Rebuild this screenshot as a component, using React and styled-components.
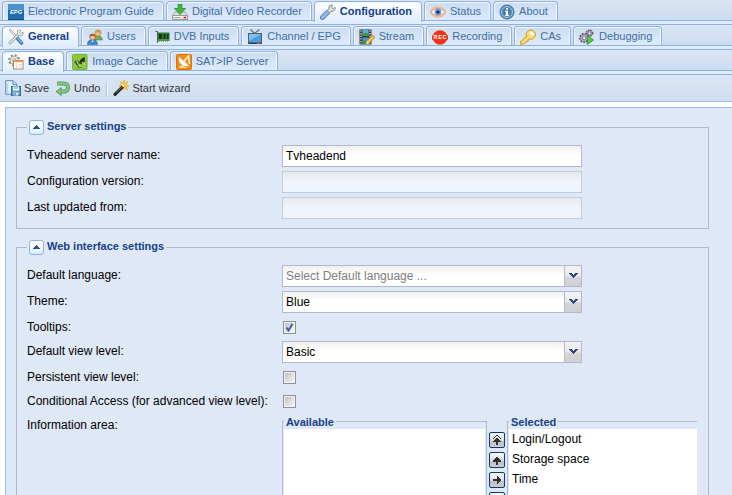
import React from 'react';
import styled, { createGlobalStyle, css } from 'styled-components';

const GlobalStyle = createGlobalStyle`
  * { box-sizing: border-box; }
  html, body { margin: 0; height: 100%; overflow: hidden; background: #fff; }
  body { font-family: "Liberation Sans", Arial, sans-serif; font-size: 12px; color: #000; }
`;

const Page = styled.div`
  height: 495px;
  overflow: hidden;
  display: flex;
  flex-direction: column;
`;

const TabStrip = styled.nav`
  flex: none;
  display: flex;
  gap: 2px;
  height: 25px;
  padding: 1px 2px 0;
  background: linear-gradient(#dae5f3, #cbdbef 20px);
  border-bottom: 1px solid #8db2e3;
  position: relative;
  &::after {
    content: '';
    position: absolute;
    left: 0;
    right: 0;
    bottom: 0;
    height: 3px;
    border-top: 1px solid #8db2e3;
    background: #deecfd;
  }
`;

const Tab = styled.div`
  display: flex;
  align-items: flex-start;
  height: 20px;
  padding: 2px 9px 0 5px;
  border: 1px solid #8db2e3;
  border-bottom: 0;
  border-radius: 4px 4px 0 0;
  box-shadow: inset 1px 1px 0 #f3f8fe, inset -1px 0 0 #f3f8fe;
  background: linear-gradient(#ccdcf2, #deebfc);
  color: #416da3;
  font-size: 11px;
  line-height: 14px;
  white-space: nowrap;
  svg { margin-right: 4px; flex: none; }
  ${(p) =>
    p.$active &&
    css`
      height: 21px;
      position: relative;
      z-index: 1;
      background: linear-gradient(#fff, #deecfd);
      color: #15428b;
      font-weight: bold;
    `}
`;

const Toolbar = styled.div`
  flex: none;
  display: flex;
  align-items: center;
  height: 27px;
  padding-left: 5px;
  border-bottom: 1px solid #a0bce6;
  background: linear-gradient(#dbe6f4, #cfdef0);
  font-size: 11px;
  color: #333;
`;

const ToolButton = styled.div`
  display: flex;
  align-items: center;
  gap: 3px;
  margin-right: ${(p) => p.$after}px;
  line-height: 16px;
  svg { flex: none; }
`;

const Separator = styled.div`
  width: 2px;
  height: 13px;
  margin-right: 5px;
  border-left: 1px solid #98c8ff;
  background: #fff;
`;

const FormPanel = styled.main`
  flex: 1;
  min-height: 0;
  overflow: hidden;
  margin: 5px 0 0 5px;
  padding: 19px 23px 0 10px;
  border: solid #99bbe8;
  border-width: 1px 0 0 1px;
  background: #dfe8f6;
`;

const Section = styled.section`
  border: 1px solid #b5b8c8;
  margin-bottom: 18px;
  padding: 0 10px 9px;
  height: ${(p) => p.$height}px;
`;

const Legend = styled.h2`
  display: flex;
  align-items: center;
  gap: 3px;
  width: max-content;
  height: 16px;
  margin: -9px 0 10px;
  padding: 0 2px;
  background: #dfe8f6;
  color: #15428b;
  font-size: 11px;
  line-height: 14px;
  span { margin-top: -2px; }
`;

const Toggle = styled.div`
  display: grid;
  place-items: center;
  width: 15px;
  height: 15px;
  border: 1px solid #8fb4e8;
  border-radius: 3px;
  background: linear-gradient(#fff, #f5f9ff 50%, #d9e8fb);
`;

const Row = styled.div`
  display: grid;
  grid-template-columns: 255px 1fr;
  height: ${(p) => p.$height || 26}px;
`;

const Label = styled.label`
  padding-top: 3px;
  line-height: 14px;
  white-space: nowrap;
`;

const Field = styled.div`
  display: flex;
  width: 300px;
  height: 22px;
  border: 1px solid ${(p) => (p.$disabled ? '#c3cad9' : '#b5b8c8')};
  background: ${(p) =>
    p.$disabled
      ? 'linear-gradient(#e6eaed, #f0f4fc 10px)'
      : 'linear-gradient(#eef0ef, #fff 9px)'};
`;

const Value = styled.div`
  flex: 1;
  padding-left: 3px;
  line-height: 20px;
  color: ${(p) => (p.$hint ? '#808080' : '#000')};
`;

const Trigger = styled.div`
  display: grid;
  place-items: center;
  width: 17px;
  padding-bottom: 1px;
  border-left: 1px solid #b5b8c8;
  background: linear-gradient(#f3f3f3, #e9e9e9 50%, #d6d6d8 55%, #d0d0d2);
`;

const Checkbox = styled.div`
  width: 13px;
  height: 13px;
  margin: 4px 0 0 1px;
  border: 1px solid #8e8f8f;
  padding: 1px;
  background: #f4f4f4;
  svg { display: block; background: linear-gradient(135deg, #bcc1c8, #f7f7f7); }
`;

const Selector = styled.div`
  display: flex;
`;

const ListBox = styled.div`
  width: ${(p) => p.$width}px;
  height: 90px;
  margin-top: 6px;
  padding: 0 ${(p) => (p.$open ? 0 : 1)}px 0 1px;
  border: 1px solid #b5b8c8;
  border-right-width: ${(p) => (p.$open ? 0 : 1)}px;
`;

const ListTitle = styled.h3`
  width: max-content;
  height: 14px;
  margin: -7px 0 0;
  padding: 0 2px;
  background: #dfe8f6;
  font-size: 11px;
  line-height: 14px;
  color: #15428b;
`;

const List = styled.ul`
  height: 80px;
  margin: 0;
  padding: 0 3px;
  list-style: none;
  background: #fff;
`;

const Item = styled.li`
  height: 20px;
  line-height: 20px;
`;

const Movers = styled.div`
  display: flex;
  flex-direction: column;
  gap: 4px;
  padding: 17px 2px 0;
`;

const Mover = styled.div`
  flex: none;
  width: 16px;
  height: 16px;
  border: 1px solid #083e75;
  border-radius: 2px;
  background: linear-gradient(#f8f9fb, #dcdde1 55%, #bfc0c6 56%, #ccccd0);
  svg { display: block; }
`;

function Icon({ children, size = 16 }) {
  return (
    <svg width={size} height={size} viewBox={`0 0 ${size} ${size}`}>
      {children}
    </svg>
  );
}

const ICONS = {
  epg: (
    <>
      <rect width="16" height="16" fill="#1f6db0" />
      <rect width="16" height="6" fill="#4a93cc" />
      <path d="M0 15.500h16" stroke="#0e4f8c" />
      <text x="8" y="9.600" textAnchor="middle" fontSize="5.600" fontWeight="bold" fontStyle="italic" fill="#fff" textLength="12">EPG</text>
    </>
  ),
  dvr: (
    <>
      <path d="M3 8h10l2.500 3.500v3.800H.5v-3.800Z" fill="#dedede" stroke="#999" strokeWidth=".8" />
      <path d="M.8 11.500h14.400v3.800H.8Z" fill="#fafafa" stroke="#777" strokeWidth=".7" />
      <path d="M2.500 13.500h6" stroke="#999" />
      <rect x="11.500" y="12.700" width="2.500" height="1.600" fill="#e11" />
      <path d="M6 .2h4v4.300h3.600L8 10.500 2.400 4.500H6Z" fill="#41b63c" stroke="#1f9020" strokeWidth=".7" />
    </>
  ),
  wrench: (
    <>
      <path d="M2.500 13.500 7.700 8.300" stroke="#5679b8" strokeWidth="4.800" strokeLinecap="round" />
      <path d="M2.600 13.400 7.700 8.300" stroke="#94b6e6" strokeWidth="3.400" strokeLinecap="round" />
      <path d="M7.300 6.500 8.800 5 9 2.300 11.500.500l1 .4-1.200 2.300 1.500 1.500 2.300-1.200.5 1-1.900 2.600-2.700.3-1.500 1.400Z" fill="#dcdcdc" stroke="#808080" strokeWidth=".8" />
    </>
  ),
  status: (
    <>
      <ellipse cx="8" cy="8" rx="8" ry="5.800" fill="#e9bd9c" />
      <path d="M.8 8Q8 1.300 15.200 8 8 14.700.8 8" fill="#fff" stroke="#c9926f" strokeWidth=".6" />
      <circle cx="8" cy="8" r="3.400" fill="#6f9bd4" />
      <circle cx="8" cy="8" r="1.600" fill="#152148" />
    </>
  ),
  about: (
    <>
      <circle cx="8" cy="8" r="7" fill="#5586b8" stroke="#416f9f" />
      <circle cx="8" cy="8" r="5.500" fill="#4c80b4" stroke="#b8d0e8" strokeWidth=".9" />
      <path d="M7 4h2v1.700H7ZM6.300 6.700H9v4h.8V12H6.300v-1.300H7V8h-.7Z" fill="#fff" />
    </>
  ),
  general: (
    <>
      <path d="M1 1 2.500.5 9 7 7.500 8.500Z" fill="#eee" stroke="#888" strokeWidth=".7" />
      <path d="m9.500 9.500 4 4.500" stroke="#3b7cc6" strokeWidth="3.600" strokeLinecap="round" />
      <path d="m9.800 9.500 3.500 3.800" stroke="#7fb4ea" strokeWidth="1.600" strokeLinecap="round" />
      <path d="M2 14 11 5" stroke="#858585" strokeWidth="2.800" strokeLinecap="round" />
      <path d="M2 14 11 5" stroke="#f0f0f0" strokeWidth="1.500" strokeLinecap="round" />
      <path d="M9.500 5V2L12 .6l.7.600-1 2.100 1.200 1.200L15 3.300l.5.800-1.400 2.600-3.300.2Z" fill="#f0f0f0" stroke="#858585" strokeWidth=".7" />
    </>
  ),
  users: (
    <>
      <path d="M6.500 11V8.600Q7.200 6.500 10.500 6.500q4.500.2 5 4.500Z" fill="#6cae53" stroke="#4d823b" strokeWidth=".6" />
      <circle cx="11" cy="4" r="3" fill="#f6bd80" stroke="#a87632" strokeWidth=".5" />
      <path d="M7.800 4Q8 .5 11.400.5 14.500.8 14.200 5 13 3 10.500 3.200Z" fill="#d09a4c" />
      <path d="M.5 15.500Q.5 10.700 5.500 10.500q4.800.2 5 5Z" fill="#4386d1" stroke="#2864aa" strokeWidth=".6" />
      <path d="m4.500 11.500 1 2 1.200-2" fill="#fff" />
      <circle cx="5.500" cy="8" r="2.900" fill="#f7c099" stroke="#80502e" strokeWidth=".5" />
      <path d="M2.500 8Q2.500 4.600 5.700 4.800 8.500 5 8.500 8 6.700 6.500 5 7Z" fill="#a2632f" />
    </>
  ),
  dvb: (
    <>
      <path d="M1.500 2.500h2V14" fill="none" stroke="#555" />
      <rect x="4" y="3.500" width="11.500" height="8.500" fill="#2f7a33" />
      <path d="M5 5h3v5H5Zm4.500 0h2v5h-2Zm3.500 0h1.500v5H13Z" fill="#17381d" />
      <path d="M4 11h11" stroke="#6aad62" />
      <path d="M5 12.500h9" stroke="#a1a953" strokeDasharray="1 1" />
    </>
  ),
  tv: (
    <>
      <path d="m3.500.5 4 4L12.500.500" fill="none" stroke="#666" strokeWidth="1.100" />
      <rect x="1" y="4" width="14" height="11" fill="#555c62" />
      <rect x="2" y="5" width="12" height="8.500" fill="#4b9de0" />
      <path d="M2 5h12L2 12Z" fill="#7cc0f2" />
      <path d="M2 14.300h12" stroke="#252a2e" />
      <path d="M10 14.300h3" stroke="#e16b4a" />
    </>
  ),
  stream: (
    <>
      <rect x=".5" y=".5" width="12" height="15" fill="#383d39" />
      <path d="M2 1.500V15M11 1.500V15" stroke="#ddd" strokeWidth="1.300" strokeDasharray="1.300 1.300" />
      <rect x="3.500" y="1" width="6" height="6" fill="#51b7dc" />
      <rect x="3.500" y="8.500" width="6" height="6.500" fill="#3e9bcb" />
      <path d="m3.500 5 3-1.500 3 1V7h-6Zm0 8 3-2 3 1v3h-6Z" fill="#3e9942" />
      <path d="m7 15.500 1-4L13.500 6 16 8.300l-5.700 5.900Z" fill="#f5c24a" stroke="#9d6c1b" strokeWidth=".7" />
      <path d="m8 11.500 2.300 2.700L7 15.500Z" fill="#f3dbb3" />
    </>
  ),
  rec: (
    <>
      <circle cx="8" cy="8.500" r="7.300" fill="#ef3514" />
      <rect y="5.800" width="16" height="5.400" rx="1.500" fill="#ef3514" />
      <text x="8" y="10.400" textAnchor="middle" fontSize="5.500" fontWeight="bold" fill="#fff" textLength="13">REC</text>
    </>
  ),
  key: (
    <>
      <path d="M.6 15.300v-2.800L7.300 6.600l3 2.800-2.100 1.600v1.200l-2 .2-.4 1.500-1.800.2-.8 1.200Z" fill="#f9d860" stroke="#cf8a20" strokeWidth=".9" />
      <circle cx="10.800" cy="5.600" r="4.600" fill="#fbde70" stroke="#cf8a20" strokeWidth=".9" />
      <path d="m8.500 8.500-6 5.300" stroke="#fbdf75" strokeWidth="2" />
      <path d="m10.800 3.500 2.400 2.100" stroke="#fff" strokeWidth="2" strokeLinecap="round" />
    </>
  ),
  debug: (
    <>
      <circle cx="10.500" cy="4.200" r="3.100" fill="#aaa0bd" stroke="#645b76" strokeWidth="1.600" strokeDasharray="1.500 1" />
      <circle cx="10.500" cy="4.200" r="1.400" fill="#eee" stroke="#665d77" strokeWidth=".6" />
      <circle cx="5.200" cy="9" r="4.300" fill="#b5aac7" stroke="#645b76" strokeWidth="1.900" strokeDasharray="1.700 1.200" />
      <circle cx="5.200" cy="9" r="1.700" fill="#eee" stroke="#665d77" strokeWidth=".7" />
      <path d="M8.300 6.500 14.500 11 8.300 15.500Z" fill="#4ed03b" stroke="#218e25" strokeWidth=".8" />
    </>
  ),
  base: (
    <>
      <circle cx="6.200" cy="6.200" r="4.800" fill="none" stroke="#858585" strokeWidth="2.400" strokeDasharray="1.800 1.970" />
      <circle cx="6.200" cy="6.200" r="4" fill="#efefef" stroke="#999" strokeWidth=".8" />
      <circle cx="6.200" cy="6.200" r="1.700" fill="#fff" stroke="#888" strokeWidth=".7" />
      <rect x="5.500" y="6.500" width="9.500" height="8.500" fill="#fffaf2" stroke="#b08060" strokeWidth=".9" />
      <path d="M5.500 7.200h9.500" stroke="#f09a40" strokeWidth="1.800" />
      <path d="M8.500 8.500v6M10 10.500h4M10 12.500h4" stroke="#dccdbd" strokeWidth=".7" />
    </>
  ),
  cache: (
    <>
      <rect x=".5" y=".5" width="14.500" height="15" rx="1" fill="#8cc83c" stroke="#79b03a" />
      <path d="M2 7.500 5 6l3 2-1 5-2.500-2Z" fill="#356021" />
      <path d="M7.500 8Q8.500 4.500 11 4l1-1 1 1-.5 4L9 10.500Z" fill="#282c25" />
      <path d="m4.500 6.500 1.500 3 2 3" fill="none" stroke="#e4f3c6" strokeWidth="1" />
      <path d="M5 13.500h5" stroke="#5f8e2d" />
      <path d="m10 8 3 3" stroke="#b5dc52" strokeWidth="1.500" />
    </>
  ),
  sat: (
    <>
      <rect x=".5" y=".5" width="15" height="15" rx="1" fill="#f28d16" stroke="#dd7208" />
      <path d="M3 3q-1 4 2 7t8 2l-4-4Z" fill="#fff" />
      <path d="M7 8.500 12.500 2l1 8" fill="none" stroke="#fff4d7" strokeWidth="1.600" />
      <path d="M3 14q1-3 3-3l5 3Z" fill="#ffe3a6" />
    </>
  ),
  save: (
    <>
      <path d="M.7.700h7.500l3.500 3.500v10H.7Z" fill="#eaf4ff" stroke="#4b88c5" />
      <path d="M8 .7v4h4" fill="#c5ddf5" stroke="#4b88c5" />
      <path d="M2.500 3v10" stroke="#b0d2f2" strokeWidth="1.500" />
      <rect x="6.500" y="6.500" width="9" height="9" fill="#5b9bdd" stroke="#3269a7" />
      <path d="M8 6.500h6v4H8Z" fill="#edf7fb" />
      <path d="M9 8h4" stroke="#66a865" />
      <path d="M8.500 12.500h5v3h-5Z" fill="#dfe9d5" />
      <path d="M10 13v2" stroke="#355b87" />
    </>
  ),
  undo: (
    <>
      <path d="M2 3.500h6q5 0 5 4t-5 4H5" fill="none" stroke="#4b9556" strokeWidth="4" />
      <path d="M6.300 7.500 1 11.500l5.300 4Z" fill="#78bd7a" stroke="#4b9556" strokeWidth=".8" />
      <path d="M2.500 3.500H8q5 0 5 4t-5 4H4" fill="none" stroke="#83c582" strokeWidth="2.600" />
    </>
  ),
  wand: (
    <>
      <path d="m11 0 .8 3.200L15 1.500l-1.500 3.200L16 6.300l-3 .5L14.500 10 11 8 9.500 10 9.300 6.800 6 6l2.800-1.600L7 1.500l3 1.200Z" fill="#ffcf2d" stroke="#ee9b20" strokeWidth=".5" />
      <path d="m2 14.300 8-8" stroke="#222" strokeWidth="3.100" strokeLinecap="round" />
      <path d="m3 12.700 6-6" stroke="#888" strokeWidth=".9" />
      <path d="m9.500 6.500 1.500-1.500" stroke="#f4f0df" strokeWidth="3" />
    </>
  ),
};

const TAB_ROWS = [
  [
    ['Electronic Program Guide', 'epg'],
    ['Digital Video Recorder', 'dvr'],
    ['Configuration', 'wrench', true],
    ['Status', 'status'],
    ['About', 'about'],
  ],
  [
    ['General', 'general', true],
    ['Users', 'users'],
    ['DVB Inputs', 'dvb'],
    ['Channel / EPG', 'tv'],
    ['Stream', 'stream'],
    ['Recording', 'rec'],
    ['CAs', 'key'],
    ['Debugging', 'debug'],
  ],
  [
    ['Base', 'base', true],
    ['Image Cache', 'cache'],
    ['SAT>IP Server', 'sat'],
  ],
];

function Combo({ value, hint }) {
  return (
    <Field>
      <Value $hint={hint}>{value}</Value>
      <Trigger>
        <svg width="9" height="6" viewBox="0 0 9 6" shapeRendering="crispEdges">
          <path d="M0 0h3v1h1v1h1V1h1V0h3v1H8v1H7v1H6v1H5v1H4V4H3V3H2V2H1V1H0Z" fill="#29477f" />
        </svg>
      </Trigger>
    </Field>
  );
}

function Check({ checked }) {
  return (
    <Checkbox>
      <svg width="9" height="9" viewBox="0 0 9 9">
        {checked && <path d="m1.500 4.500 2 3L7.500.7" fill="none" stroke="#4258a0" strokeWidth="1.900" />}
      </svg>
    </Checkbox>
  );
}

function SectionTitle({ children }) {
  return (
    <Legend>
      <Toggle>
        <svg width="7" height="4" viewBox="0 0 7 4" shapeRendering="crispEdges">
          <path d="M3 0h1v1h1v1h1v1h1v1H0V3h1V2h1V1h1Z" fill="#2f4fa0" />
        </svg>
      </Toggle>
      <span>{children}</span>
    </Legend>
  );
}

const MOVES = [
  'M6 5h2v1h1v1h1v1h1v1H8v3H6V9H3V8h1V7h1V6h1ZM6 2h2v1H6ZM5 3h1v1H5ZM8 3h1v1H8ZM4 4h1v1H4ZM9 4h1v1H9ZM3 5h1v1H3ZM10 5h1v1h-1Z',
  'M6 4h2v1h1v1h1v1h1v2H8v3H6V9H3V7h1V6h1V5h1Z',
  'M3 6h4V3h1v1h1v1h1v1h1v2h-1v1H9v1H8v1H7V8H3Z',
  'M3 6h4V3h1v1h1v1h1v1h1v2h-1v1H9v1H8v1H7V8H3Z',
];

export default function App() {
  return (
    <Page>
      <GlobalStyle />
      {TAB_ROWS.map((tabs, i) => (
        <TabStrip key={i}>
          {tabs.map(([name, icon, active]) => (
            <Tab key={name} $active={active}>
              <Icon>{ICONS[icon]}</Icon>
              {name}
            </Tab>
          ))}
        </TabStrip>
      ))}
      <Toolbar>
        <ToolButton $after={6}><Icon>{ICONS.save}</Icon>Save</ToolButton>
        <ToolButton $after={6}><Icon>{ICONS.undo}</Icon>Undo</ToolButton>
        <Separator />
        <ToolButton $after={0}><Icon>{ICONS.wand}</Icon>Start wizard</ToolButton>
      </Toolbar>
      <FormPanel>
        <Section $height={102}>
          <SectionTitle>Server settings</SectionTitle>
          <Row><Label>Tvheadend server name:</Label><Field><Value>Tvheadend</Value></Field></Row>
          <Row><Label>Configuration version:</Label><Field $disabled /></Row>
          <Row><Label>Last updated from:</Label><Field $disabled /></Row>
        </Section>
        <Section $height={300}>
          <SectionTitle>Web interface settings</SectionTitle>
          <Row><Label>Default language:</Label><Combo value="Select Default language ..." hint /></Row>
          <Row><Label>Theme:</Label><Combo value="Blue" /></Row>
          <Row $height={24}><Label>Tooltips:</Label><Check checked /></Row>
          <Row><Label>Default view level:</Label><Combo value="Basic" /></Row>
          <Row $height={24}><Label>Persistent view level:</Label><Check /></Row>
          <Row $height={24}><Label>Conditional Access (for advanced view level):</Label><Check /></Row>
          <Row $height={96}>
            <Label>Information area:</Label>
            <Selector>
              <ListBox $width={205}>
                <ListTitle>Available</ListTitle>
                <List />
              </ListBox>
              <Movers>
                {MOVES.map((d, i) => (
                  <Mover key={i}>
                    <svg width="14" height="14" viewBox="0 0 14 14" shapeRendering="crispEdges">
                      <path d={d} fill="#333" />
                    </svg>
                  </Mover>
                ))}
              </Movers>
              <ListBox $width={190} $open>
                <ListTitle>Selected</ListTitle>
                <List>
                  <Item>Login/Logout</Item>
                  <Item>Storage space</Item>
                  <Item>Time</Item>
                </List>
              </ListBox>
            </Selector>
          </Row>
        </Section>
      </FormPanel>
    </Page>
  );
}
